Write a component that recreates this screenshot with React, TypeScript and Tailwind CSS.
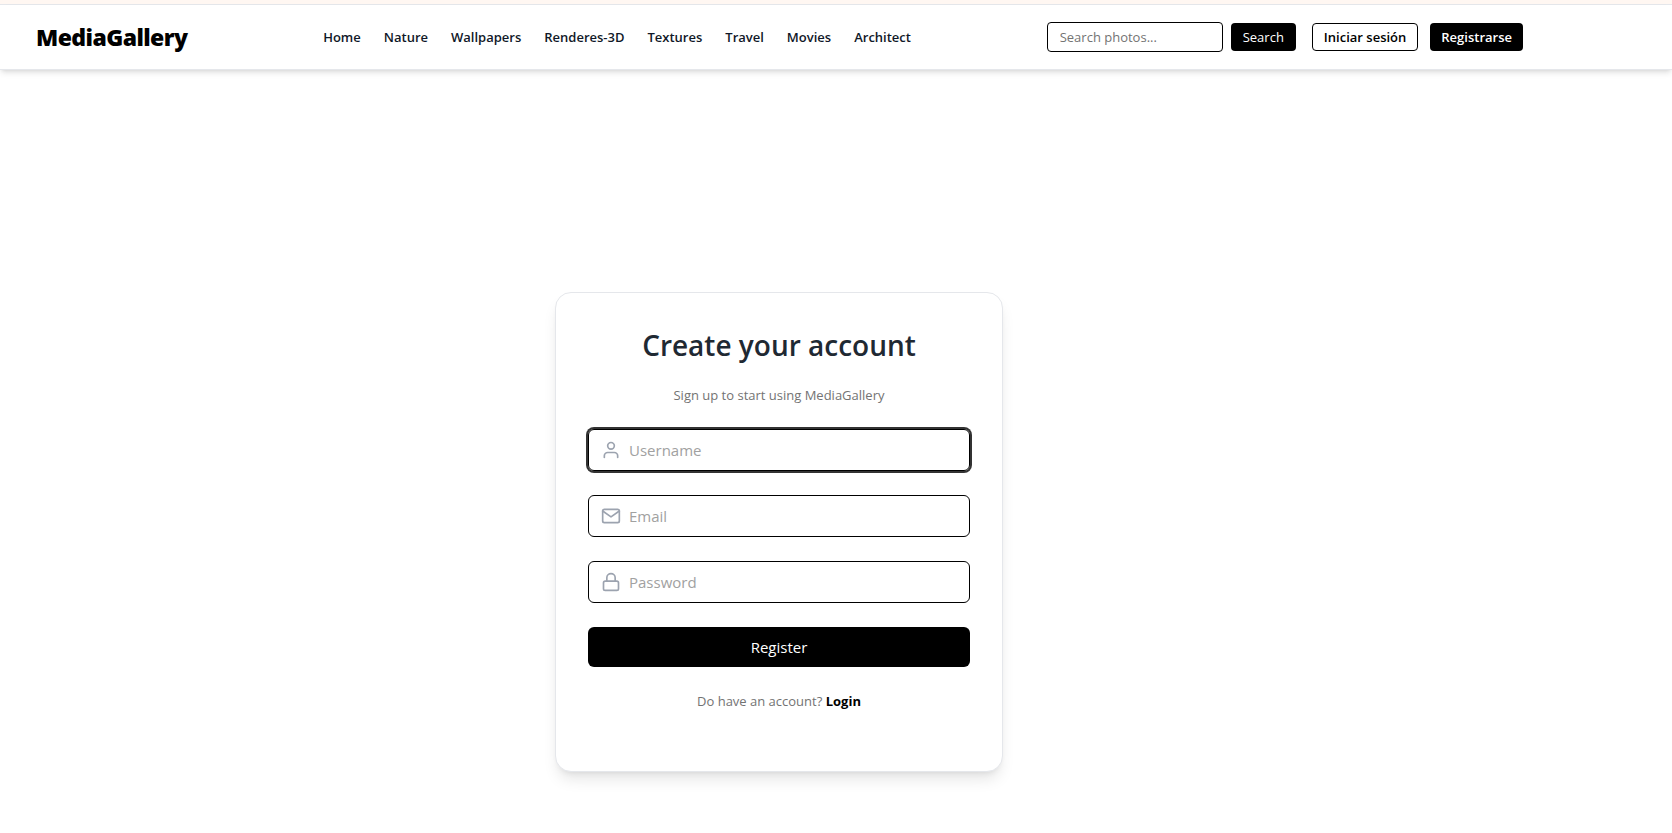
import React, { useState } from "react";
import { FiLock, FiMail, FiUser } from "react-icons/fi";

const categories = [
  "Home",
  "Nature",
  "Wallpapers",
  "Renderes-3D",
  "Textures",
  "Travel",
  "Movies",
  "Architect",
];

const fields = [
  { name: "username", label: "Username", type: "text", icon: FiUser },
  { name: "email", label: "Email", type: "email", icon: FiMail },
  { name: "password", label: "Password", type: "password", icon: FiLock },
];

const Header: React.FC = () => {
  const [query, setQuery] = useState<string>("");

  return (
    <header className="border-b border-gray-200 bg-white shadow-md">
      <div className="flex h-16 w-full max-w-[1559px] items-center justify-between px-9">
        <a href="#" className="text-[23px] leading-8 font-extrabold tracking-tight text-black">
          MediaGallery
        </a>
        <nav className="flex gap-[23px] text-[13px] leading-5 font-semibold text-gray-900">
          {categories.map((category) => (
            <a key={category} href="#" className="hover:text-gray-600">
              {category}
            </a>
          ))}
        </nav>
        <div className="flex items-center gap-4 text-[13px] leading-5">
          <form className="flex items-center gap-2" onSubmit={(e) => e.preventDefault()}>
            <input
              type="text"
              aria-label="Search photos"
              placeholder="Search photos..."
              value={query}
              onChange={(e) => setQuery(e.target.value)}
              className="h-[30px] w-44 rounded border border-black px-3 placeholder:text-neutral-500"
            />
            <button type="submit" className="h-7 rounded bg-black px-3 text-white">
              Search
            </button>
          </form>
          <div className="flex items-center gap-3 font-semibold">
            <button className="h-7 rounded border border-black px-[11px] text-black">
              Iniciar sesión
            </button>
            <button className="h-7 rounded bg-black px-[11px] text-white">Registrarse</button>
          </div>
        </div>
      </div>
    </header>
  );
};

const RegisterCard: React.FC = () => (
  <div className="w-full max-w-md rounded-2xl border border-gray-200 bg-white px-8 pt-8 pb-[60px] shadow-lg">
    <h1 className="text-center text-[28px] leading-10 font-semibold text-[#1f2933]">
      Create your account
    </h1>
    <p className="mt-5 text-center text-[13px] leading-5 text-neutral-500">
      Sign up to start using MediaGallery
    </p>
    <form className="mt-6 flex flex-col gap-6" onSubmit={(e) => e.preventDefault()}>
      {fields.map(({ name, label, type, icon: Icon }) => (
        <div key={name} className="relative">
          <label htmlFor={name} className="absolute top-[11px] left-[13px] text-[#9ca3af]">
            <Icon size={20} />
          </label>
          <input
            id={name}
            name={name}
            type={type}
            aria-label={label}
            placeholder={label}
            autoFocus={name === "username"}
            className="h-[42px] w-full rounded-md border border-black pr-3 pl-10 text-[15px] outline-none placeholder:text-neutral-400 focus:ring-2 focus:ring-[#333333]"
          />
        </div>
      ))}
      <button type="submit" className="h-10 rounded-md bg-black text-[15px] text-white">
        Register
      </button>
    </form>
    <p className="mt-6 text-center text-[13px] leading-5 text-neutral-500">
      Do have an account?{" "}
      <a href="#" className="font-bold text-black">
        Login
      </a>
    </p>
  </div>
);

const App: React.FC = () => {
  return (
    <div className="min-h-screen bg-white font-['Open_Sans',sans-serif]">
      <div className="h-[5px] border-b border-gray-200 bg-[#fff7f2]" />
      <Header />
      <main className="flex w-full max-w-[1558px] justify-center pt-[222px] pb-10">
        <RegisterCard />
      </main>
    </div>
  );
};

export default App;
